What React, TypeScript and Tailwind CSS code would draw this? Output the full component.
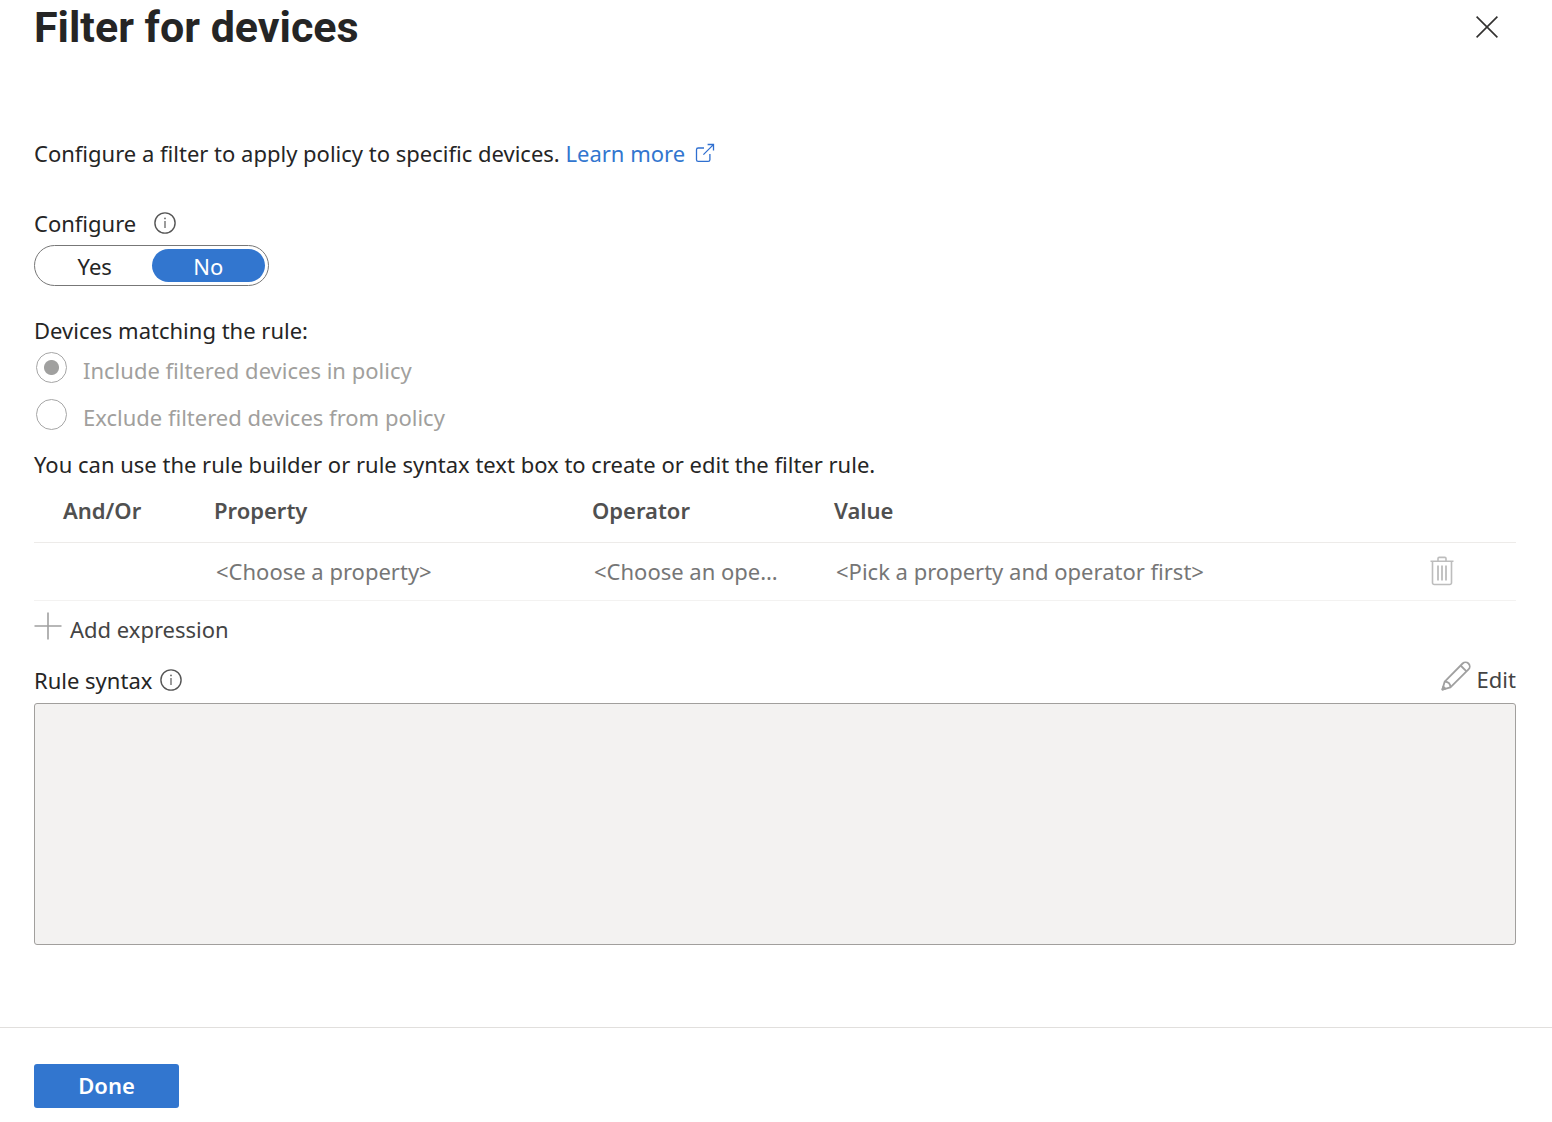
import React, { useState } from "react";
import clsx from "clsx";

type FilterMode = "include" | "exclude";

const filterModes: { value: FilterMode; label: string }[] = [
  { value: "include", label: "Include filtered devices in policy" },
  { value: "exclude", label: "Exclude filtered devices from policy" },
];

const InfoIcon = () => (
  <svg width="22" height="22" viewBox="0 0 22 22" fill="none" aria-hidden="true">
    <circle cx="11" cy="11" r="10.1" stroke="#555" strokeWidth="1.4" />
    <path d="M11 9v7" stroke="#666" strokeWidth="1.3" />
    <circle cx="11" cy="6.4" r="0.9" fill="#666" />
  </svg>
);

const CloseIcon = () => (
  <svg width="22" height="22" viewBox="0 0 22 22" fill="none" stroke="#323130" strokeWidth="1.6" aria-hidden="true">
    <path d="M0.6 0.6l20.8 20.8M21.4 0.6L0.6 21.4" />
  </svg>
);

const ExternalIcon = () => (
  <svg width="20" height="20" viewBox="0 0 20 20" fill="none" stroke="#2f6fd0" strokeWidth="1.3" aria-hidden="true">
    <path d="M9 5H3.2A1.7 1.7 0 0 0 1.5 6.7v10a1.7 1.7 0 0 0 1.7 1.7h10a1.7 1.7 0 0 0 1.7-1.7V11" />
    <path d="M8.4 11.6L18.4 1.6M12.6 1.5h5.9v6" />
  </svg>
);

const TrashIcon = () => (
  <svg width="24" height="30" viewBox="0 0 24 30" fill="none" stroke="#bdbdbd" strokeWidth="1.6" aria-hidden="true">
    <path d="M0.5 5.3h23M8 5V2.6A1.2 1.2 0 0 1 9.2 1.4h5.6A1.2 1.2 0 0 1 16 2.6V5" />
    <path d="M2.5 5.5v21.3A1.7 1.7 0 0 0 4.2 28.5h15.6a1.7 1.7 0 0 0 1.7-1.7V5.5" />
    <path d="M8 9.5v15M12 9.5v15M16 9.5v15" strokeWidth="1.8" />
  </svg>
);

const PlusIcon = () => (
  <svg width="28" height="28" viewBox="0 0 28 28" fill="none" stroke="#a0a0a0" strokeWidth="1.6" aria-hidden="true">
    <path d="M14 0.5v27M0.5 14h27" />
  </svg>
);

const PencilIcon = () => (
  <svg width="30" height="30" viewBox="0 0 30 30" fill="none" stroke="#a0a0a0" strokeWidth="1.8" strokeLinejoin="round" aria-hidden="true">
    <path d="M1.4 28.6l2.3-8L21.6 2.5a4 4 0 0 1 5.9 5.9L9.4 26.3z" />
    <path d="M19.6 4.5l5.900 5.900M3.700 20.600c3.400.2 5.700 2.400 5.700 5.700" />
    <path d="M1.4 28.6l.9-3 2.100 2.100z" fill="#a0a0a0" />
  </svg>
);

const App = () => {
  const [configured, setConfigured] = useState(false);
  const [mode, setMode] = useState<FilterMode>("include");

  const toggleStyle = (active: boolean) =>
    clsx(
      "h-[33px] flex-1 rounded-full leading-8",
      active ? "bg-[#3276cf] text-white" : "text-[#252525]"
    );

  return (
    <div className="flex min-h-screen flex-col bg-white font-['Noto_Sans','Segoe_UI',sans-serif] text-[22px] leading-8 text-[#252525]">
      <header className="flex h-[54px] items-center justify-between pr-[54px] pl-[34px]">
        <h1 className="font-['Roboto',sans-serif] text-[43px] font-bold">
          Filter for devices
        </h1>
        <button aria-label="Close">
          <CloseIcon />
        </button>
      </header>

      <main className="flex flex-1 flex-col pt-[83px] pr-9 pl-[34px]">
        <p>
          Configure a filter to apply policy to specific devices.{" "}
          <a href="#learn-more" className="inline-flex items-center gap-2.5 text-[#3276cf]">
            Learn more
            <ExternalIcon />
          </a>
        </p>

        <div id="configure-label" className="mt-[38px] flex items-center gap-[18px]">
          Configure
          <InfoIcon />
        </div>
        <div
          role="group"
          aria-labelledby="configure-label"
          className="mt-1.5 flex h-[41px] w-[235px] items-center rounded-full border border-[#777] px-[3px]"
        >
          <button className={toggleStyle(configured)} onClick={() => setConfigured(true)}>
            Yes
          </button>
          <button className={toggleStyle(!configured)} onClick={() => setConfigured(false)}>
            No
          </button>
        </div>

        <fieldset disabled={!configured} className="mt-7">
          <legend>Devices matching the rule:</legend>
          {filterModes.map(({ value, label }) => (
            <label key={value} className="flex h-[47px] items-center gap-4 pl-0.5 text-[#a19f9d]">
              <input
                type="radio"
                name="filter-mode"
                className="mb-1 size-[31px] appearance-none rounded-full border border-[#a6a6a6] checked:bg-[radial-gradient(circle,#a0a09f_7px,transparent_8px)]"
                checked={mode === value}
                onChange={() => setMode(value)}
              />
              {label}
            </label>
          ))}
        </fieldset>

        <p className="mt-2">
          You can use the rule builder or rule syntax text box to create or edit the filter rule.
        </p>

        <table className="w-full table-fixed text-left">
          <thead>
            <tr className="h-[62px] border-b border-[#edebe9] text-[#505050]">
              <th className="w-[180px] pb-0.5 pl-[29px] font-semibold">And/Or</th>
              <th className="w-[378px] pb-0.5 font-semibold">Property</th>
              <th className="w-[242px] pb-0.5 font-semibold">Operator</th>
              <th className="pb-0.5 font-semibold">Value</th>
              <th className="w-[86px]" />
            </tr>
          </thead>
          <tbody>
            <tr className="h-[58px] border-b border-[#f3f2f1] text-[#767676]">
              <td />
              <td>
                <select aria-label="Property" disabled={!configured} className="w-[300px] appearance-none truncate pl-0.5">
                  <option>&lt;Choose a property&gt;</option>
                </select>
              </td>
              <td>
                <select aria-label="Operator" disabled={!configured} className="w-[192px] appearance-none truncate pl-0.5">
                  <option>&lt;Choose an operator&gt;</option>
                </select>
              </td>
              <td>
                <input
                  aria-label="Value"
                  disabled
                  placeholder="<Pick a property and operator first>"
                  className="w-full pl-0.5 placeholder:text-[#767676]"
                />
              </td>
              <td>
                <button aria-label="Delete expression" disabled={!configured} className="block">
                  <TrashIcon />
                </button>
              </td>
            </tr>
          </tbody>
        </table>

        <button className="mt-[11px] flex items-start gap-2 self-start text-[#444]">
          <PlusIcon />
          <span className="pt-px">Add expression</span>
        </button>

        <div className="mt-4 flex items-start justify-between">
          <label htmlFor="rule-syntax" className="flex items-center gap-2 pt-[3px]">
            Rule syntax
            <InfoIcon />
          </label>
          <button className="flex items-start gap-1.5 text-[#444]">
            <PencilIcon />
            <span className="pt-0.5">Edit</span>
          </button>
        </div>
        <textarea
          id="rule-syntax"
          disabled={!configured}
          className="mt-[7px] h-[242px] w-full resize-none rounded-[3px] border border-[#a19f9d] bg-[#f3f2f1]"
        />
      </main>

      <footer className="border-t border-[#e1dfdd] px-[34px] pt-9 pb-3.5">
        <button className="h-11 w-[145px] rounded-[3px] bg-[#3276cf] pb-0.5 font-semibold text-white">
          Done
        </button>
      </footer>
    </div>
  );
};

export default App;
